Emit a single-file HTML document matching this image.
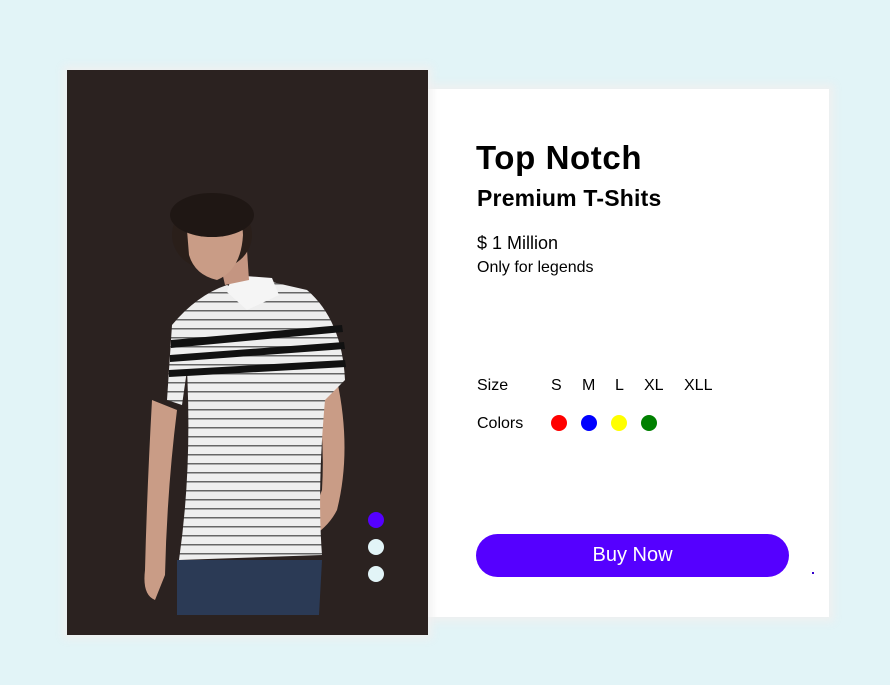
<!DOCTYPE html>
<html><head><meta charset="utf-8"><style>
body{margin:0;width:890px;height:685px;background:#e2f4f7;font-family:"Liberation Sans",sans-serif;position:relative;overflow:hidden}
.img{position:absolute;left:67px;top:70px;width:361px;height:565px;background:#2b2220;box-shadow:0 0 8px 4px rgba(240,240,240,.9);z-index:3}
.panel{position:absolute;left:428px;top:89px;width:401px;height:528px;background:#fff;box-shadow:0 0 8px 5px rgba(240,240,240,.9);z-index:2}
.t{position:absolute;color:#000;white-space:nowrap;z-index:4}
.dot{position:absolute;width:16px;height:16px;border-radius:50%;z-index:4}
</style></head><body>
<div class="img">
<svg width="361" height="565" viewBox="0 0 361 565">
 <defs><pattern id="st" width="10" height="9" patternUnits="userSpaceOnUse"><rect width="10" height="9" fill="#eeeeee"/><rect y="6" width="10" height="1.5" fill="#666"/></pattern></defs>
 <path d="M110 490 L255 490 L252 545 L110 545 Z" fill="#2b3a55"/>
 <path d="M85 330 Q80 420 78 500 Q75 525 88 530 L98 505 Q100 420 110 340 Z" fill="#c99c86"/>
 <path d="M270 310 Q285 380 270 440 Q255 470 210 480 L205 470 Q245 450 255 420 Q258 370 250 320 Z" fill="#c99c86"/>
 <path d="M160 215 Q130 225 105 255 L100 330 L115 335 L120 300 Q125 400 112 490 L255 485 Q250 420 258 330 L278 310 Q275 250 240 220 L205 212 Q180 225 160 215 Z" fill="url(#st)"/>
 <g fill="#111">
  <path d="M104 270 L275 255 L276 262 L104 278Z"/>
  <path d="M103 285 L277 272 L278 279 L103 292Z"/>
  <path d="M102 300 L278 290 L279 297 L102 307Z"/>
 </g>
 <path d="M165 205 L205 208 L212 225 L180 240 L160 222 Z" fill="#f5f5f5"/>
 <path d="M150 180 L180 180 L182 210 L158 215 Z" fill="#c49581"/>
 <ellipse cx="145" cy="165" rx="40" ry="35" fill="#2a1f1a"/>
 <path d="M120 160 Q120 130 148 130 Q175 135 176 165 Q174 200 150 210 Q128 205 122 185 Z" fill="#c99c86"/>
 <ellipse cx="145" cy="145" rx="42" ry="22" fill="#1f1714"/>
</svg>
<div class="dot" style="left:301px;top:442px;background:#5500ff"></div>
<div class="dot" style="left:301px;top:469px;background:#e2f4f7"></div>
<div class="dot" style="left:301px;top:496px;background:#e2f4f7"></div>
</div>
<div class="panel"></div>
<div class="t" style="left:476px;top:139px;font-size:33px;font-weight:bold;letter-spacing:0.6px">Top Notch</div>
<div class="t" style="left:477px;top:185px;font-size:23px;font-weight:bold;letter-spacing:0.2px">Premium T-Shits</div>
<div class="t" style="left:477px;top:233px;font-size:18px">$ 1 Million</div>
<div class="t" style="left:477px;top:259px;font-size:16px">Only for legends</div>
<div class="t" style="left:477px;top:377px;font-size:16px">Size</div>
<div class="t" style="left:551px;top:377px;font-size:16px">S</div>
<div class="t" style="left:582px;top:377px;font-size:16px">M</div>
<div class="t" style="left:615px;top:377px;font-size:16px">L</div>
<div class="t" style="left:644px;top:377px;font-size:16px">XL</div>
<div class="t" style="left:684px;top:377px;font-size:16px">XLL</div>
<div class="t" style="left:477px;top:415px;font-size:16px">Colors</div>
<div class="dot" style="left:551px;top:415px;background:#ff0000"></div>
<div class="dot" style="left:581px;top:415px;background:#0000ff"></div>
<div class="dot" style="left:611px;top:415px;background:#ffff00"></div>
<div class="dot" style="left:641px;top:415px;background:#008000"></div>
<div style="position:absolute;z-index:4;left:476px;top:534px;width:313px;height:43px;border-radius:22px;background:#5500ff;color:#fff;font-size:20px;text-align:center;line-height:43px">Buy Now</div>
<div style="position:absolute;z-index:4;left:812px;top:572px;width:2px;height:2px;background:#3300cc"></div>
</body></html>
